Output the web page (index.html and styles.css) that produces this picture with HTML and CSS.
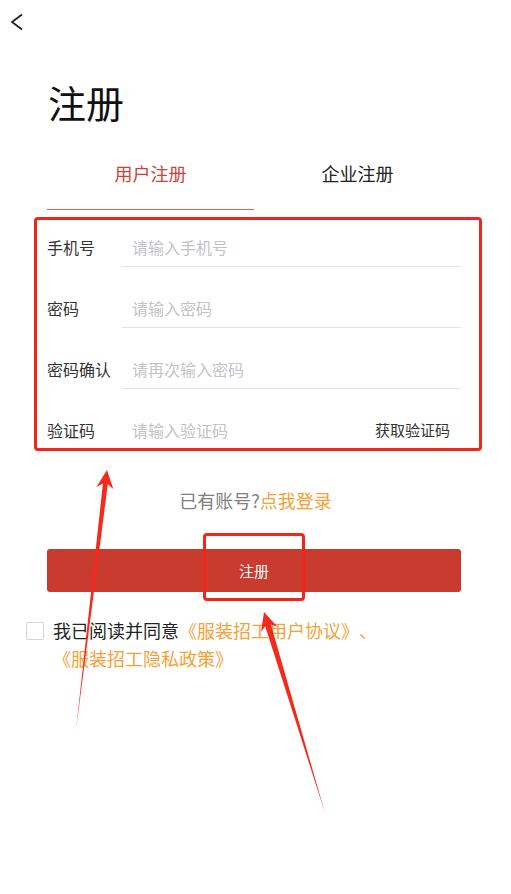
FILE: index.html
```html
<!DOCTYPE html>
<html lang="zh-CN">
<head>
  <meta charset="UTF-8" />
  <meta name="viewport" content="width=device-width, initial-scale=1.0"/>
  <title>注册</title>
  <link rel="stylesheet" href="styles.css">
</head>
<body>
  <div class="page">
    <header class="topbar">
      <button class="back" type="button" aria-label="返回">
        <svg width="14" height="20" viewBox="0 0 14 20">
          <polyline points="12,2.5 2,10 12,17.5" fill="none" stroke="#222" stroke-width="1.8" stroke-linejoin="miter"/>
        </svg>
      </button>
    </header>

    <h1 class="title">注册</h1>

    <div class="tabs">
      <div class="tab active">用户注册</div>
      <div class="tab">企业注册</div>
    </div>

    <form class="reg-form" id="regForm">
      <div class="row">
        <span class="label">手机号</span>
        <div class="field"><input type="tel" placeholder="请输入手机号" /></div>
      </div>
      <div class="row">
        <span class="label">密码</span>
        <div class="field"><input type="password" placeholder="请输入密码" /></div>
      </div>
      <div class="row">
        <span class="label">密码确认</span>
        <div class="field"><input type="password" placeholder="请再次输入密码" /></div>
      </div>
      <div class="row last">
        <span class="label">验证码</span>
        <div class="field">
          <input type="text" placeholder="请输入验证码" />
          <button class="code-btn" type="button">获取验证码</button>
        </div>
      </div>
    </form>

    <p class="login-tip">已有账号?<a href="#">点我登录</a></p>

    <div class="submit-wrap">
      <button class="submit" type="button">注册</button>
      <span class="mark"></span>
    </div>

    <div class="agree">
      <span class="checkbox"></span>
      <p class="agree-text">我已阅读并同意<a href="#">《服装招工用户协议》、</a><a href="#">《服装招工隐私政策》</a></p>
    </div>

    <!-- annotation arrows -->
    <svg class="arrows" width="511" height="894" viewBox="0 0 511 894">
      <polygon points="107,470 113.3,488.9 107.8,484.2 76,730 102.9,483.6 96.4,486.9" fill="#f42a1c"/>
      <polygon points="264,612 277.4,626.8 270.9,624.5 325,813 265.2,626.2 261.1,631.7" fill="#f42a1c"/>
    </svg>
  </div>
</body>
</html>
```

FILE: styles.css
```css
* {
  box-sizing: border-box;
  font-family: "Noto Sans CJK SC", "Noto Sans", sans-serif;
  text-spacing-trim: space-all;
}

body {
  margin: 0;
  background: #fff;
  color: #222;
}

.page {
  position: relative;
  width: 511px;
  min-height: 894px;
}

.topbar {
  height: 44px;
  display: flex;
  align-items: center;
  padding-left: 10px;
}

.back {
  border: none;
  background: none;
  padding: 0;
  display: flex;
}

.title {
  margin: 35px 0 0 48px;
  font-size: 38px;
  font-weight: normal;
  line-height: 46px;
  color: #111;
}

.tabs {
  display: flex;
  margin: 0 50px 0 47px;
}

.tab {
  flex: 1;
  text-align: center;
  font-size: 18px;
  line-height: 24px;
  padding: 36px 0 24px;
  color: #222;
}

.tab.active {
  color: #c8453a;
  border-bottom: 1px solid #d9685a;
}

.reg-form {
  margin: 7px 0 0 34px;
  width: 448px;
  border: 3px solid #f0261b;
  border-radius: 4px;
  padding: 4px 18px 0 10px;
  display: flex;
  flex-direction: column;
  gap: 18px;
}

.row {
  display: flex;
}

.label {
  width: 75px;
  font-size: 16px;
  line-height: 22px;
  padding-top: 12px;
  color: #333;
}

.field {
  flex: 1;
  display: flex;
  align-items: center;
  padding: 12px 0 8px;
  border-bottom: 1px solid #e3e3e6;
}

.row.last .field {
  border-bottom: none;
  padding-bottom: 7px;
}

.field input {
  flex: 1;
  min-width: 0;
  border: none;
  outline: none;
  padding: 0 0 0 10px;
  height: 22px;
  font-size: 16px;
  color: #333;
  background: transparent;
}

.field input::placeholder {
  color: #c2c3ca;
}

.code-btn {
  border: none;
  background: none;
  padding: 0 11px 0 0;
  font-size: 15px;
  line-height: 22px;
  color: #333;
}

.login-tip {
  margin: 36px 0 0;
  text-align: center;
  font-size: 18px;
  line-height: 26px;
  color: #808080;
}

.login-tip a,
.agree-text a {
  color: #f4a236;
  text-decoration: none;
}

.submit-wrap {
  position: relative;
  margin: 36px 50px 0 47px;
}

.submit {
  display: block;
  width: 100%;
  height: 43px;
  border: none;
  border-radius: 3px;
  background: #c93b2e;
  color: #fff;
  font-size: 15px;
}

.mark {
  position: absolute;
  left: 156px;
  top: -16px;
  width: 102px;
  height: 68px;
  border: 3px solid #f0261b;
  border-radius: 4px;
}

.agree {
  display: flex;
  align-items: flex-start;
  margin: 24px 20px 0 26px;
  gap: 9px;
}

.checkbox {
  flex: none;
  width: 18px;
  height: 18px;
  margin-top: 6px;
  border: 1px solid #d4d4d4;
  border-radius: 2px;
}

.agree-text {
  margin: 0;
  font-size: 18px;
  line-height: 28px;
  color: #222;
}

.agree-text a {
  white-space: nowrap;
}

.arrows {
  position: absolute;
  left: 0;
  top: 0;
  pointer-events: none;
}
```
